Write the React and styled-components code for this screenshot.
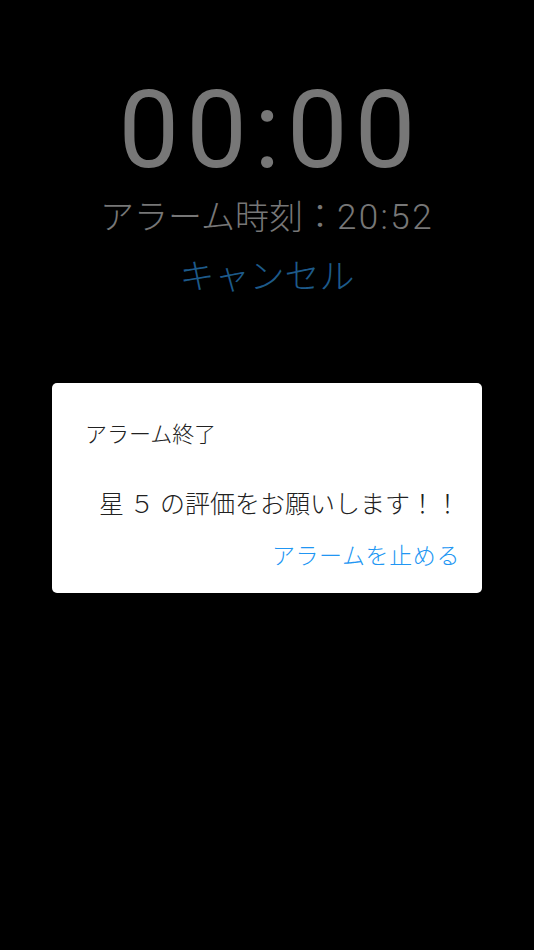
import React from "react";
import styled, { createGlobalStyle } from "styled-components";

const GlobalStyle = createGlobalStyle`
  html, body {
    margin: 0;
    padding: 0;
    background: #000;
  }
  body {
    font-family: "Noto Sans CJK JP", sans-serif;
  }
`;

export default function App() {
  return (
    <Screen>
      <GlobalStyle />
      <Clock>00:00</Clock>
      <AlarmTime>
        アラーム時刻：<TimeValue>20:52</TimeValue>
      </AlarmTime>
      <CancelButton>キャンセル</CancelButton>
      <Dialog>
        <DialogTitle>アラーム終了</DialogTitle>
        <DialogMessage>星 ５ の評価をお願いします！！</DialogMessage>
        <DialogActions>
          <ActionButton>アラームを止める</ActionButton>
        </DialogActions>
      </Dialog>
    </Screen>
  );
}

const Screen = styled.div`
  display: flex;
  flex-direction: column;
  align-items: center;
  min-height: 100vh;
  padding-top: 76px;
  box-sizing: border-box;
  background: #000;
`;
const Clock = styled.div`
  font-family: Roboto, sans-serif;
  font-size: 108px;
  line-height: 108px;
  letter-spacing: 7px;
  margin-right: -7px;
  color: #777777;
`;
const AlarmTime = styled.div`
  display: flex;
  align-items: baseline;
  height: 40px;
  margin-top: 11px;
  font-family: "Noto Sans CJK JP", sans-serif;
  font-size: 34px;
  font-weight: 300;
  line-height: 40px;
  white-space: nowrap;
  color: #777777;
`;
const TimeValue = styled.span`
  font-family: Roboto, sans-serif;
  font-size: 35px;
  font-weight: 300;
  letter-spacing: 2.4px;
`;
const CancelButton = styled.button`
  margin-top: 19px;
  padding: 0;
  border: none;
  background: transparent;
  font-family: "Noto Sans CJK JP", sans-serif;
  font-size: 35px;
  font-weight: 300;
  line-height: 40px;
  color: #1d5a8a;
  cursor: pointer;
`;
const Dialog = styled.div`
  display: flex;
  flex-direction: column;
  align-self: flex-start;
  margin: 89px 0 0 52px;
  width: 430px;
  height: 210px;
  box-sizing: border-box;
  border-radius: 5px;
  background: #fff;
`;
const DialogTitle = styled.div`
  margin-top: 34px;
  padding-left: 33px;
  font-size: 22px;
  font-weight: 300;
  line-height: 30px;
  color: #212121;
`;
const DialogMessage = styled.div`
  margin-top: 40px;
  padding-right: 22px;
  text-align: right;
  font-size: 25px;
  font-weight: 300;
  line-height: 30px;
  color: #212121;
`;
const DialogActions = styled.div`
  display: flex;
  justify-content: flex-end;
  margin-top: 22px;
  padding-right: 22px;
`;
const ActionButton = styled.button`
  padding: 0;
  border: none;
  background: transparent;
  font-family: "Noto Sans CJK JP", sans-serif;
  font-size: 23px;
  font-weight: 300;
  line-height: 30px;
  letter-spacing: 0.6px;
  color: #2196f3;
  cursor: pointer;
`;
